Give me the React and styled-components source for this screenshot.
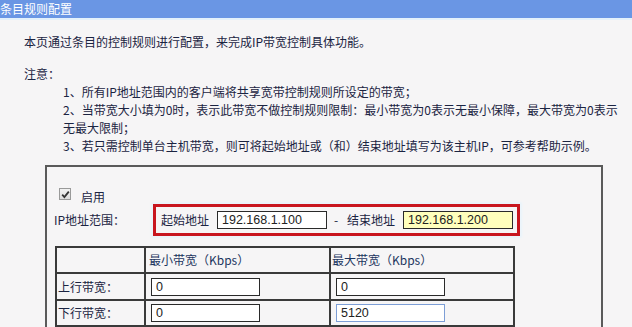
import React from "react";
import styled, { createGlobalStyle } from "styled-components";

const Global = createGlobalStyle`
  html, body { margin: 0; padding: 0; }
  body {
    background: #f6f5f6;
    font-family: "Noto Sans CJK SC", "Liberation Sans", sans-serif;
    font-size: 12px;
    color: #1b2442;
  }
`;

const Page = styled.div`
  display: flex;
  flex-direction: column;
`;

const TitleBar = styled.div`
  height: 18px;
  line-height: 18px;
  background: #6a96e4;
  color: #ffffff;
  font-size: 12px;
  border-bottom: 2px solid #e4f1fb;
  white-space: nowrap;
`;

const Main = styled.div`
  padding: 13px 0 0 24px;
`;

const Line = styled.div`
  line-height: 18px;
  white-space: nowrap;
`;

const NoteTitle = styled(Line)`
  margin-top: 14px;
`;

const NoteList = styled.div`
  padding-left: 39px;
`;

const Frame = styled.div`
  margin: 10px 0 0 21px;
  width: 558px;
  box-sizing: border-box;
  border: 2px solid #5a5a5a;
  padding: 21px 0 12px 0;
`;

const EnableRow = styled.div`
  display: flex;
  align-items: flex-start;
  height: 16px;
  padding-left: 12px;
  gap: 10px;
`;

const Check = styled.span`
  width: 12px;
  height: 12px;
  box-sizing: border-box;
  border: 1px solid #9a9a9a;
  background: linear-gradient(#f2f2f2, #dcdcdc);
  display: flex;
  align-items: center;
  justify-content: center;
`;

const EnableText = styled.span`
  line-height: 18px;
`;

const RangeRow = styled.div`
  display: flex;
  align-items: center;
  padding-left: 7px;
`;

const RangeLabel = styled.span`
  width: 99px;
  flex: none;
  line-height: 18px;
  white-space: nowrap;
`;

const RedFrame = styled.div`
  display: flex;
  align-items: center;
  flex: none;
  box-sizing: border-box;
  width: 367px;
  height: 32px;
  border: 3px solid #c8161f;
  padding: 0 4px 0 5px;
  box-shadow: 0 0 2px 2px #eaf4fb;
`;

const FieldLabel = styled.span`
  line-height: 18px;
  white-space: nowrap;
`;

const Dash = styled.span`
  width: 13px;
  margin-left: 7px;
  line-height: 18px;
`;

const TextBox = styled.input`
  box-sizing: border-box;
  width: ${(p) => p.$w || 110}px;
  height: 18px;
  margin: 0 0 0 ${(p) => p.$ml ?? 8}px;
  padding: 0 0 0 4px;
  border: 1px solid ${(p) => (p.$focus ? "#7d9ed6" : "#2a2a2a")};
  background: ${(p) => (p.$yellow ? "#ffffbc" : "#ffffff")};
  font-family: "Liberation Sans", Arial, sans-serif;
  font-size: 12.5px;
  color: #222;
  outline: none;
`;

const Table = styled.table`
  margin: 10px 0 0 8px;
  width: 458px;
  table-layout: fixed;
  border-collapse: collapse;
  border: 2px solid #3a3a3a;
`;

const Cell = styled.td`
  border: 2px solid #3a3a3a;
  height: ${(p) => p.$h || 26}px;
  padding: 0 0 0 ${(p) => p.$pl ?? 3}px;
  vertical-align: middle;
  line-height: 18px;
  white-space: nowrap;
  color: ${(p) => (p.$head ? "#1d3560" : "#1b2442")};
  box-sizing: border-box;
`;

const CellBox = styled.div`
  display: flex;
  align-items: center;
`;

const CheckMark = () => (
  <svg width="9" height="9" viewBox="0 0 9 9">
    <path d="M1.2 4.6 L3.4 7 L7.8 1.6" fill="none" stroke="#333" strokeWidth="1.8" />
  </svg>
);

export default function App() {
  return (
    <Page>
      <Global />
      <TitleBar>条目规则配置</TitleBar>
      <Main>
        <Line>本页通过条目的控制规则进行配置，来完成IP带宽控制具体功能。</Line>
        <NoteTitle>注意：</NoteTitle>
        <NoteList>
          <Line>1、所有IP地址范围内的客户端将共享宽带控制规则所设定的带宽；</Line>
          <Line>2、当带宽大小填为0时，表示此带宽不做控制规则限制：最小带宽为0表示无最小保障，最大带宽为0表示</Line>
          <Line>无最大限制；</Line>
          <Line>3、若只需控制单台主机带宽，则可将起始地址或（和）结束地址填写为该主机IP，可参考帮助示例。</Line>
        </NoteList>
        <Frame>
          <EnableRow>
            <Check>
              <CheckMark />
            </Check>
            <EnableText>启用</EnableText>
          </EnableRow>
          <RangeRow>
            <RangeLabel>IP地址范围：</RangeLabel>
            <RedFrame>
              <FieldLabel>起始地址</FieldLabel>
              <TextBox readOnly value="192.168.1.100" />
              <Dash>-</Dash>
              <FieldLabel>结束地址</FieldLabel>
              <TextBox readOnly $yellow value="192.168.1.200" />
            </RedFrame>
          </RangeRow>
          <Table>
            <colgroup>
              <col style={{ width: 89 }} />
              <col style={{ width: 185 }} />
              <col style={{ width: 184 }} />
            </colgroup>
            <tbody>
              <tr>
                <Cell $h={26}></Cell>
                <Cell $h={26} $head>最小带宽（Kbps）</Cell>
                <Cell $h={26} $head $pl={1}>最大带宽（Kbps）</Cell>
              </tr>
              <tr>
                <Cell $h={27} $pl={1}>上行带宽：</Cell>
                <Cell $h={27}>
                  <CellBox>
                    <TextBox readOnly $ml={2} $w={109} value="0" />
                  </CellBox>
                </Cell>
                <Cell $h={27}>
                  <CellBox>
                    <TextBox readOnly $ml={2} $w={109} value="0" />
                  </CellBox>
                </Cell>
              </tr>
              <tr>
                <Cell $h={26} $pl={1}>下行带宽：</Cell>
                <Cell $h={26}>
                  <CellBox>
                    <TextBox readOnly $ml={2} $w={109} value="0" />
                  </CellBox>
                </Cell>
                <Cell $h={26}>
                  <CellBox>
                    <TextBox readOnly $ml={2} $w={109} $focus value="5120" />
                  </CellBox>
                </Cell>
              </tr>
            </tbody>
          </Table>
        </Frame>
      </Main>
    </Page>
  );
}
